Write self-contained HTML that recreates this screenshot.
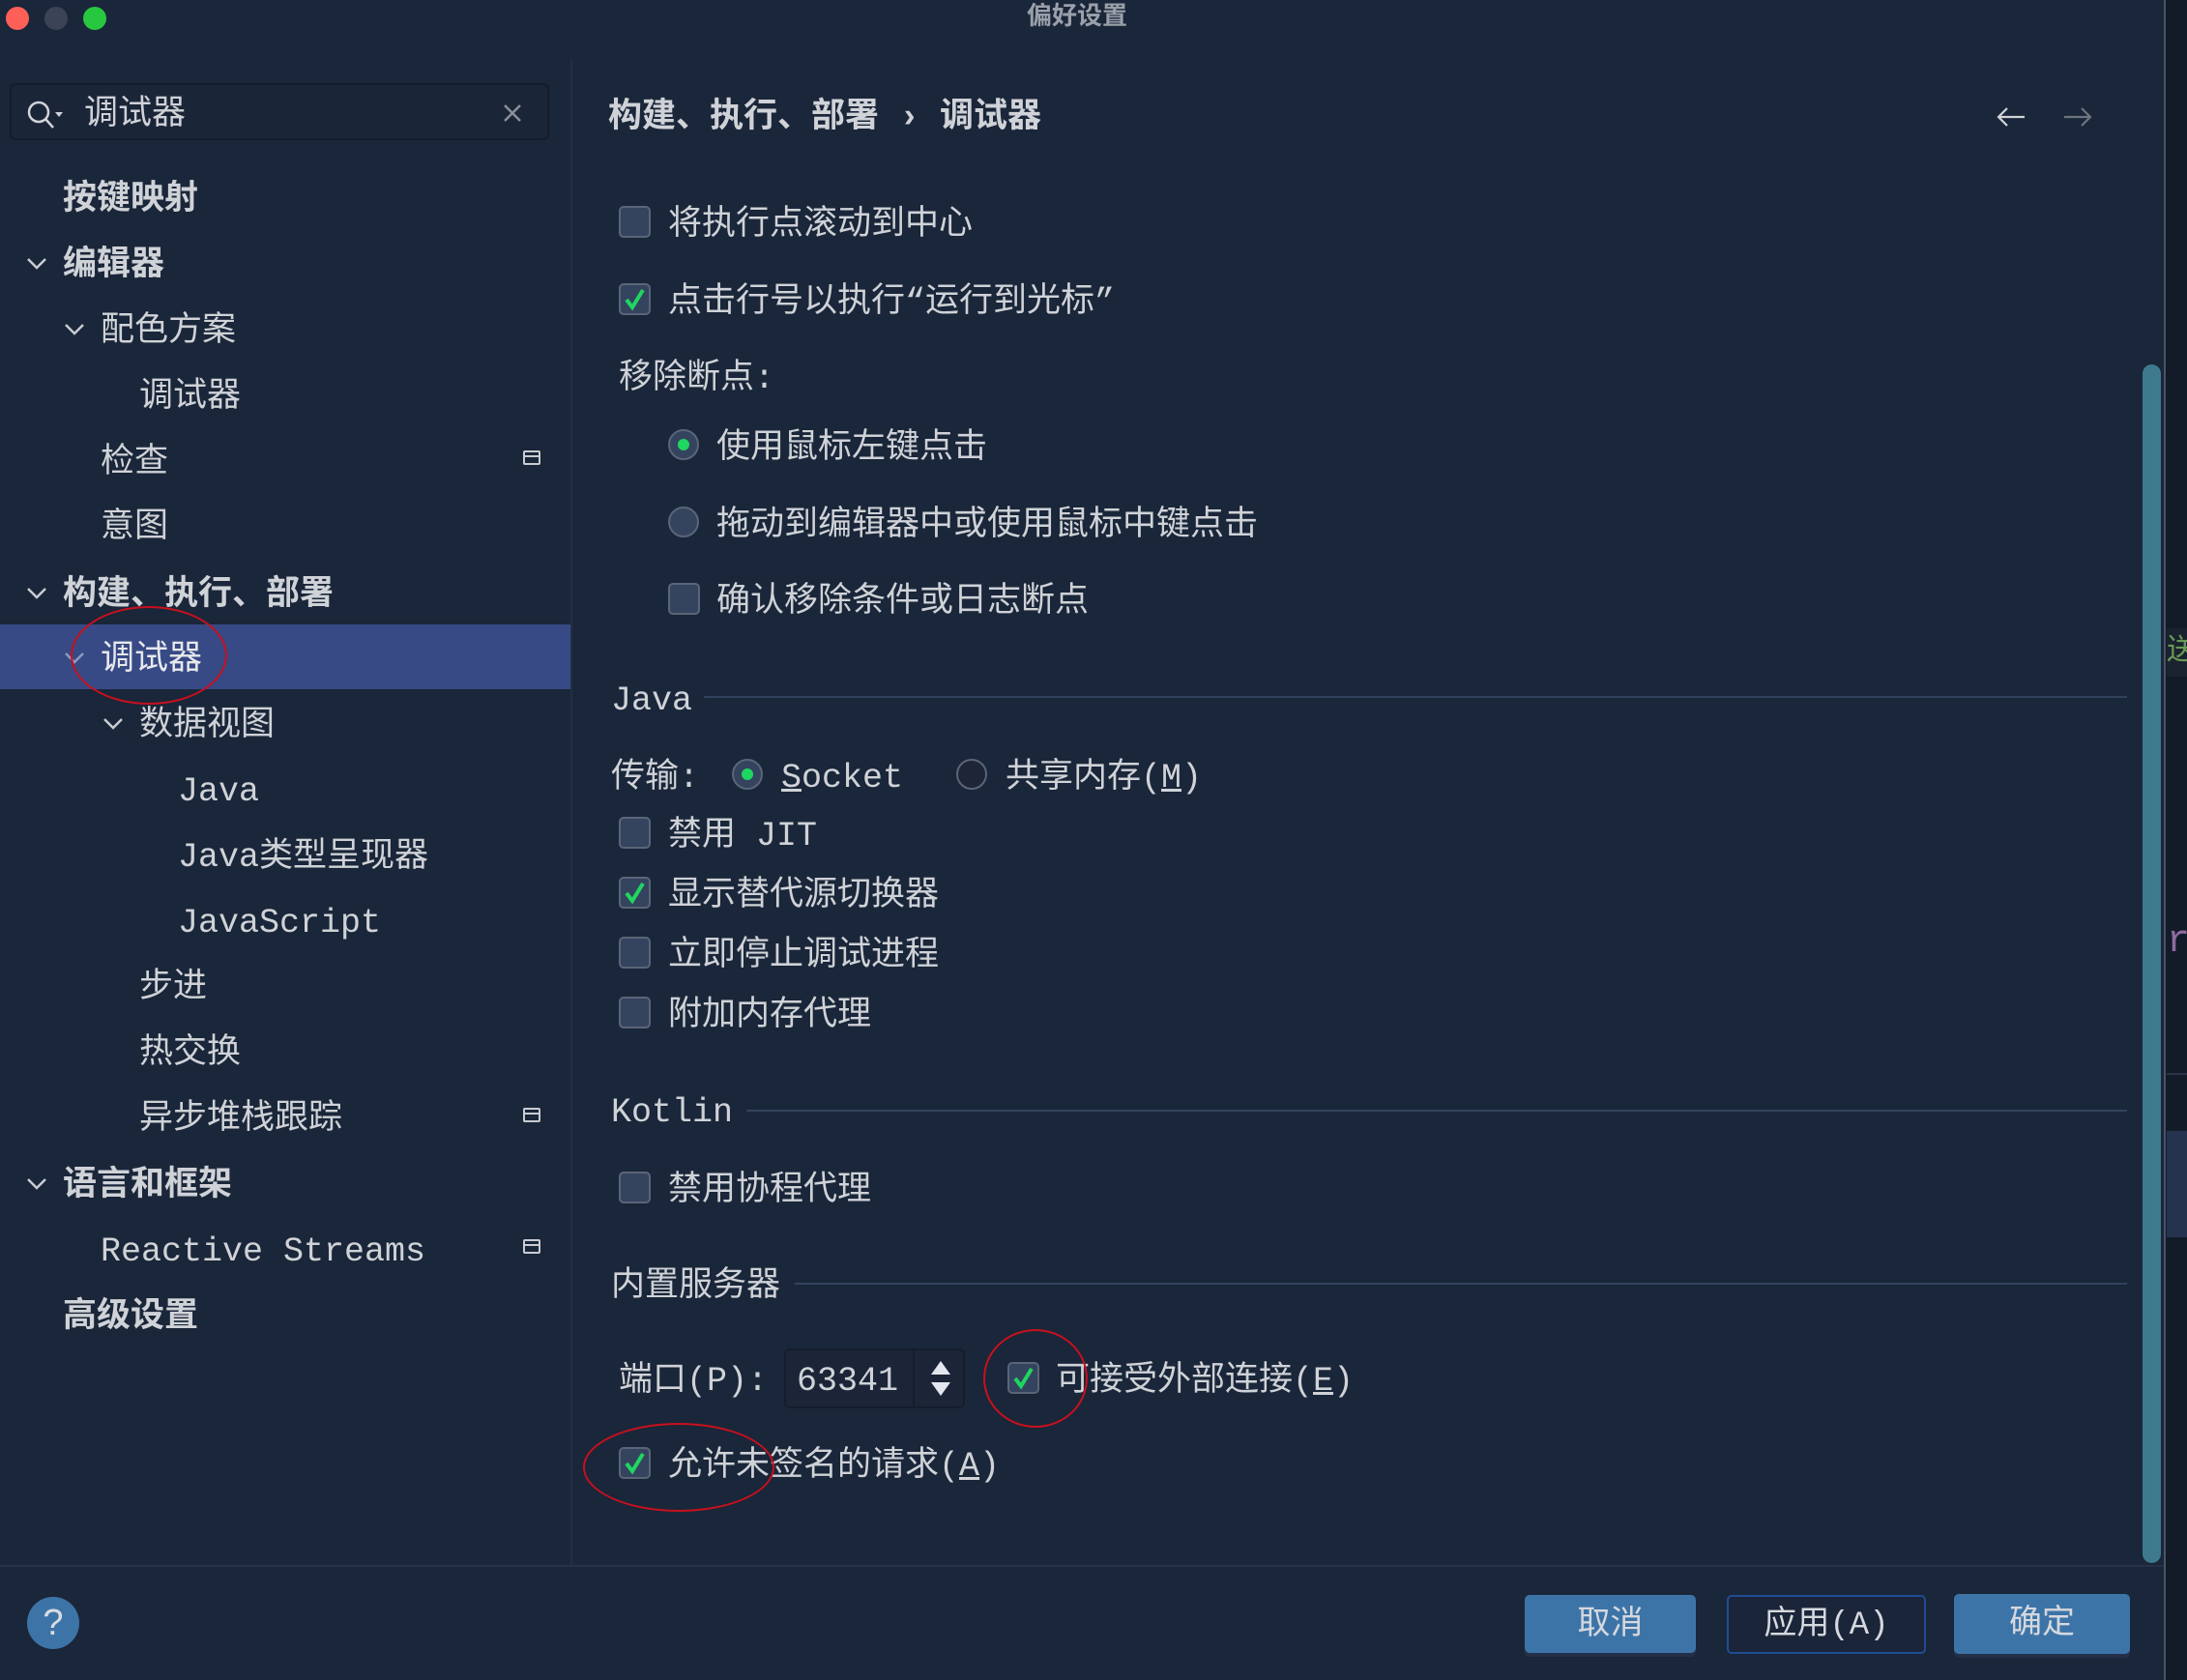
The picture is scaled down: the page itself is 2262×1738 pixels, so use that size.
<!DOCTYPE html>
<html><head><meta charset="utf-8">
<style>
html,body{margin:0;padding:0}
body{width:2262px;height:1738px;background:#1a2639;position:relative;overflow:hidden;font-family:"Liberation Mono","Noto Sans CJK SC",monospace;color:#cfd2d7}
.t{position:absolute;font-size:35px;line-height:35px;white-space:nowrap;margin-top:4px}
.b{font-weight:bold}
.cb{position:absolute;width:29px;height:29px;border:2px solid #5b6578;border-radius:5px;background:#34435e}
.rd{position:absolute;width:32px;height:32px;border:2px solid #5b6578;border-radius:50%;background:#34435e;box-sizing:border-box}
.rd.on::after{content:"";position:absolute;left:8px;top:8px;width:12px;height:12px;border-radius:50%;background:#1fd660}
.rd.off{background:#1d2536}
.ln{position:absolute;height:2px;background:#33425c}
.chev{position:absolute;width:22px;height:14px}
.ico{position:absolute;width:18px;height:15px;border:2px solid #c9ccd2;border-radius:2px;box-sizing:border-box}
.ico::after{content:"";position:absolute;left:0;right:0;top:3px;height:2px;background:#c9ccd2}
.ell{position:absolute;border:2px solid #c8101e;border-radius:50%}
.btn{position:absolute;font-size:34px;line-height:64px;text-align:center;border-radius:5px;box-sizing:border-box}
</style></head><body>
<!-- title bar -->
<div style="position:absolute;left:6px;top:7px;width:24px;height:24px;border-radius:50%;background:#fe5f57"></div>
<div style="position:absolute;left:46px;top:7px;width:24px;height:24px;border-radius:50%;background:#3b4456"></div>
<div style="position:absolute;left:86px;top:7px;width:24px;height:24px;border-radius:50%;background:#27c840"></div>
<div class="t b" style="left:1062px;top:1px;font-size:26px;line-height:26px;color:#9aa0aa">偏好设置</div>

<!-- sidebar -->
<div style="position:absolute;left:10px;top:86px;width:558px;height:59px;border:2px solid #141d2c;border-radius:6px;background:#1b2538;box-sizing:border-box"></div>
<svg style="position:absolute;left:26px;top:102px" width="44" height="34" viewBox="0 0 44 34"><circle cx="14" cy="14" r="10" fill="none" stroke="#d0d3d8" stroke-width="2.5"/><line x1="21" y1="21" x2="29" y2="30" stroke="#d0d3d8" stroke-width="2.5"/><path d="M31 14 L39 14 L35 19 Z" fill="#d0d3d8"/></svg>
<div class="t" style="left:87px;top:98px">调试器</div>
<svg style="position:absolute;left:520px;top:107px" width="20" height="20"><path d="M2 2L18 18M18 2L2 18" stroke="#8a9099" stroke-width="2.5"/></svg>
<div style="position:absolute;left:590px;top:61px;width:2px;height:1558px;background:#222e43"></div>

<div style="position:absolute;left:0;top:646px;width:590px;height:67px;background:#384a85"></div>

<svg class="chev" style="left:27px;top:266px"><path d="M2 2L11 11L20 2" fill="none" stroke="#c9ccd2" stroke-width="2.5"/></svg>
<svg class="chev" style="left:66px;top:334px"><path d="M2 2L11 11L20 2" fill="none" stroke="#c9ccd2" stroke-width="2.5"/></svg>
<svg class="chev" style="left:27px;top:607px"><path d="M2 2L11 11L20 2" fill="none" stroke="#c9ccd2" stroke-width="2.5"/></svg>
<svg class="chev" style="left:66px;top:674px"><path d="M2 2L11 11L20 2" fill="none" stroke="#8d9bbf" stroke-width="2.5"/></svg>
<svg class="chev" style="left:106px;top:742px"><path d="M2 2L11 11L20 2" fill="none" stroke="#c9ccd2" stroke-width="2.5"/></svg>
<svg class="chev" style="left:27px;top:1218px"><path d="M2 2L11 11L20 2" fill="none" stroke="#c9ccd2" stroke-width="2.5"/></svg>

<div class="t b" style="left:65px;top:186px">按键映射</div>
<div class="t b" style="left:65px;top:254px">编辑器</div>
<div class="t" style="left:104px;top:322px">配色方案</div>
<div class="t" style="left:144px;top:390px">调试器</div>
<div class="t" style="left:104px;top:458px">检查</div><div class="ico" style="left:541px;top:466px"></div>
<div class="t" style="left:104px;top:525px">意图</div>
<div class="t b" style="left:65px;top:595px">构建、执行、部署</div>
<div class="t" style="left:104px;top:662px;color:#e6e8ec">调试器</div>
<div class="t" style="left:144px;top:730px">数据视图</div>
<div class="t" style="left:184px;top:798px">Java</div>
<div class="t" style="left:184px;top:866px">Java类型呈现器</div>
<div class="t" style="left:184px;top:934px">JavaScript</div>
<div class="t" style="left:144px;top:1001px">步进</div>
<div class="t" style="left:144px;top:1069px">热交换</div>
<div class="t" style="left:144px;top:1137px">异步堆栈跟踪</div><div class="ico" style="left:541px;top:1146px"></div>
<div class="t b" style="left:65px;top:1206px">语言和框架</div>
<div class="t" style="left:104px;top:1274px">Reactive Streams</div><div class="ico" style="left:541px;top:1282px"></div>
<div class="t b" style="left:65px;top:1342px">高级设置</div>
<div class="ell" style="left:73px;top:627px;width:158px;height:98px"></div>

<!-- right panel -->
<div class="t b" style="left:629px;top:101px">构建、执行、部署 › 调试器</div>
<svg style="position:absolute;left:2064px;top:110px" width="32" height="22"><path d="M30 11H3M12 2L3 11L12 20" fill="none" stroke="#d0d3d8" stroke-width="2.2"/></svg>
<svg style="position:absolute;left:2133px;top:110px" width="32" height="22"><path d="M2 11H29M20 2L29 11L20 20" fill="none" stroke="#6d7480" stroke-width="2.2"/></svg>

<div class="cb" style="left:640px;top:213px"></div><div class="t" style="left:691px;top:212px">将执行点滚动到中心</div>
<div class="cb" style="left:640px;top:293px"></div><div class="t" style="left:691px;top:292px">点击行号以执行“运行到光标”</div>
<div class="t" style="left:640px;top:371px">移除断点:</div>
<div class="rd on" style="left:691px;top:444px"></div><div class="t" style="left:741px;top:443px">使用鼠标左键点击</div>
<div class="rd" style="left:691px;top:524px"></div><div class="t" style="left:741px;top:523px">拖动到编辑器中或使用鼠标中键点击</div>
<div class="cb" style="left:691px;top:603px"></div><div class="t" style="left:741px;top:602px">确认移除条件或日志断点</div>

<div class="t" style="left:632px;top:704px">Java</div><div class="ln" style="left:728px;top:720px;width:1472px"></div>
<div class="t" style="left:632px;top:784px">传输:</div>
<div class="rd on" style="left:757px;top:785px"></div><div class="t" style="left:808px;top:784px"><u>S</u>ocket</div>
<div class="rd off" style="left:989px;top:785px"></div><div class="t" style="left:1040px;top:784px">共享内存(<u>M</u>)</div>
<div class="cb" style="left:640px;top:845px"></div><div class="t" style="left:691px;top:844px">禁用 JIT</div>
<div class="cb" style="left:640px;top:907px"></div><div class="t" style="left:691px;top:906px">显示替代源切换器</div>
<div class="cb" style="left:640px;top:969px"></div><div class="t" style="left:691px;top:968px">立即停止调试进程</div>
<div class="cb" style="left:640px;top:1031px"></div><div class="t" style="left:691px;top:1030px">附加内存代理</div>

<div class="t" style="left:632px;top:1130px">Kotlin</div><div class="ln" style="left:772px;top:1148px;width:1428px"></div>
<div class="cb" style="left:640px;top:1212px"></div><div class="t" style="left:691px;top:1211px">禁用协程代理</div>

<div class="t" style="left:632px;top:1310px">内置服务器</div><div class="ln" style="left:822px;top:1327px;width:1378px"></div>
<div class="t" style="left:640px;top:1408px">端口(P):</div>
<div style="position:absolute;left:811px;top:1395px;width:187px;height:62px;border:2px solid #141d2c;border-radius:6px;background:#1c2537;box-sizing:border-box"></div>
<div style="position:absolute;left:944px;top:1397px;width:2px;height:58px;background:#141d2c"></div>
<div class="t" style="left:824px;top:1408px">63341</div>
<svg style="position:absolute;left:960px;top:1405px" width="26" height="42"><path d="M13 3L23 17H3Z M13 39L23 25H3Z" fill="#e3e6ee"/></svg>
<div class="cb" style="left:1042px;top:1409px"></div><div class="t" style="left:1092px;top:1408px">可接受外部连接(<u>E</u>)</div>
<div class="cb" style="left:640px;top:1497px"></div><div class="t" style="left:691px;top:1496px">允许未签名的请求(<u>A</u>)</div>

<!-- checkmarks -->
<svg style="position:absolute;left:643px;top:296px" width="27" height="27"><path d="M5 14L11 22L22 4" fill="none" stroke="#1fd660" stroke-width="4"/></svg>
<svg style="position:absolute;left:643px;top:910px" width="27" height="27"><path d="M5 14L11 22L22 4" fill="none" stroke="#1fd660" stroke-width="4"/></svg>
<svg style="position:absolute;left:1045px;top:1412px" width="27" height="27"><path d="M5 14L11 22L22 4" fill="none" stroke="#1fd660" stroke-width="4"/></svg>
<svg style="position:absolute;left:643px;top:1500px" width="27" height="27"><path d="M5 14L11 22L22 4" fill="none" stroke="#1fd660" stroke-width="4"/></svg>

<div class="ell" style="left:1017px;top:1375px;width:104px;height:98px"></div>
<div class="ell" style="left:603px;top:1472px;width:194px;height:88px"></div>

<!-- scrollbar -->
<div style="position:absolute;left:2216px;top:377px;width:19px;height:1240px;border-radius:10px;background:#3e7a8d"></div>

<!-- right strip outside window -->
<div style="position:absolute;left:2238px;top:0;width:24px;height:1738px;background:#131a28;border-left:2px solid #4a5466"></div>
<div style="position:absolute;left:2241px;top:650px;width:21px;height:50px;background:#1a2230;color:#6a9a55;font-size:30px;line-height:50px;overflow:hidden">送</div>
<div style="position:absolute;left:2241px;top:950px;width:21px;height:50px;color:#8e6ba0;font-size:40px;line-height:50px;overflow:hidden">r</div>
<div style="position:absolute;left:2241px;top:1110px;width:21px;height:2px;background:#2a3446"></div>
<div style="position:absolute;left:2241px;top:1170px;width:21px;height:110px;background:#26334f"></div>

<!-- bottom -->
<div style="position:absolute;left:0;top:1619px;width:2238px;height:2px;background:#253249"></div>
<div style="position:absolute;left:28px;top:1652px;width:54px;height:54px;border-radius:50%;background:#3d74a8;color:#d8dce2;font-family:'Liberation Sans',sans-serif;font-size:38px;line-height:54px;text-align:center">?</div>
<div class="btn" style="left:1577px;top:1650px;width:177px;height:60px;background:#3d74a8;color:#d5d8de;box-shadow:0 4px 0 #243049">取消</div>
<div class="btn" style="left:1786px;top:1650px;width:206px;height:61px;border:2px solid #1f4d93;background:#1a2539;color:#d5d8de;line-height:60px">应用(A)</div>
<div class="btn" style="left:2021px;top:1649px;width:182px;height:62px;background:#3d74a8;color:#d5d8de;box-shadow:0 4px 0 #243049">确定</div>
</body></html>
